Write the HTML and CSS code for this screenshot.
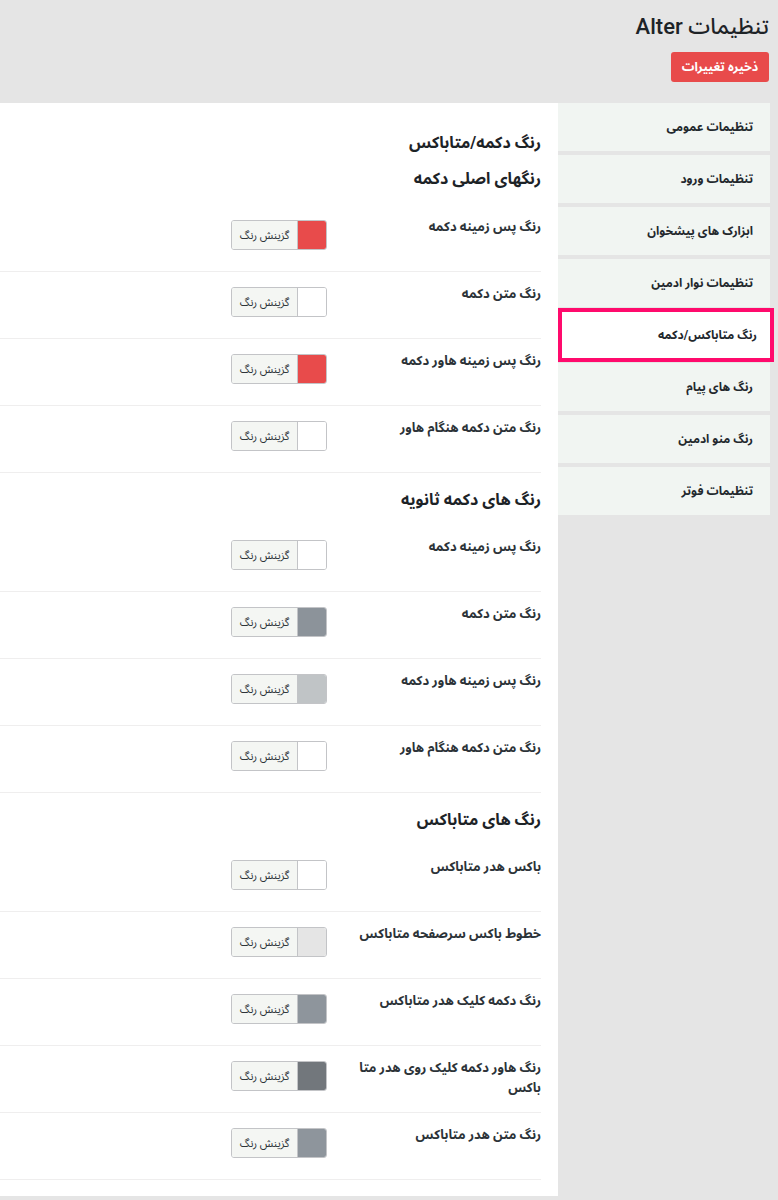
FILE: index.html
```html
<!DOCTYPE html>
<html lang="fa" dir="rtl">
<head>
<meta charset="utf-8">
<title>تنظیمات Alter</title>
<link rel="stylesheet" href="styles.css">
</head>
<body>
<div class="wrap">
  <header class="page-head">
    <h1 class="title">تنظیمات Alter</h1>
    <button class="save-btn" type="button">ذخیره تغییرات</button>
  </header>
  <div class="layout">
    <nav class="tabs">
      <a class="tab">تنظیمات عمومی</a>
      <a class="tab">تنظیمات ورود</a>
      <a class="tab">ابزارک های پیشخوان</a>
      <a class="tab">تنظیمات نوار ادمین</a>
      <a class="tab active">رنگ متاباکس/دکمه</a>
      <a class="tab">رنگ های پیام</a>
      <a class="tab">رنگ منو ادمین</a>
      <a class="tab">تنظیمات فوتر</a>
    </nav>
    <main class="panel">
      <h2 class="panel-title">رنگ دکمه/متاباکس</h2>

      <h3 class="group-title first">رنگهای اصلی دکمه</h3>
      <div class="row"><div class="label">رنگ پس زمینه دکمه</div><div class="field"><span class="picker"><span class="swatch" style="background:#e84b4b"></span><span class="pick-text">گزینش رنگ</span></span></div></div>
      <div class="row"><div class="label">رنگ متن دکمه</div><div class="field"><span class="picker"><span class="swatch" style="background:#ffffff"></span><span class="pick-text">گزینش رنگ</span></span></div></div>
      <div class="row"><div class="label">رنگ پس زمینه هاور دکمه</div><div class="field"><span class="picker"><span class="swatch" style="background:#e84b4b"></span><span class="pick-text">گزینش رنگ</span></span></div></div>
      <div class="row"><div class="label">رنگ متن دکمه هنگام هاور</div><div class="field"><span class="picker"><span class="swatch" style="background:#ffffff"></span><span class="pick-text">گزینش رنگ</span></span></div></div>

      <h3 class="group-title">رنگ های دکمه ثانویه</h3>
      <div class="row"><div class="label">رنگ پس زمینه دکمه</div><div class="field"><span class="picker"><span class="swatch" style="background:#ffffff"></span><span class="pick-text">گزینش رنگ</span></span></div></div>
      <div class="row"><div class="label">رنگ متن دکمه</div><div class="field"><span class="picker"><span class="swatch" style="background:#8c939a"></span><span class="pick-text">گزینش رنگ</span></span></div></div>
      <div class="row"><div class="label">رنگ پس زمینه هاور دکمه</div><div class="field"><span class="picker"><span class="swatch" style="background:#c0c4c6"></span><span class="pick-text">گزینش رنگ</span></span></div></div>
      <div class="row"><div class="label">رنگ متن دکمه هنگام هاور</div><div class="field"><span class="picker"><span class="swatch" style="background:#ffffff"></span><span class="pick-text">گزینش رنگ</span></span></div></div>

      <h3 class="group-title">رنگ های متاباکس</h3>
      <div class="row"><div class="label">باکس هدر متاباکس</div><div class="field"><span class="picker"><span class="swatch" style="background:#ffffff"></span><span class="pick-text">گزینش رنگ</span></span></div></div>
      <div class="row"><div class="label">خطوط باکس سرصفحه متاباکس</div><div class="field"><span class="picker"><span class="swatch" style="background:#e5e5e5"></span><span class="pick-text">گزینش رنگ</span></span></div></div>
      <div class="row"><div class="label">رنگ دکمه کلیک هدر متاباکس</div><div class="field"><span class="picker"><span class="swatch" style="background:#8e959c"></span><span class="pick-text">گزینش رنگ</span></span></div></div>
      <div class="row"><div class="label">رنگ هاور دکمه کلیک روی هدر متا باکس</div><div class="field"><span class="picker"><span class="swatch" style="background:#72777c"></span><span class="pick-text">گزینش رنگ</span></span></div></div>
      <div class="row"><div class="label">رنگ متن هدر متاباکس</div><div class="field"><span class="picker"><span class="swatch" style="background:#8e959c"></span><span class="pick-text">گزینش رنگ</span></span></div></div>
    </main>
  </div>
</div>
</body>
</html>
```

FILE: styles.css
```css
* { box-sizing: border-box; }

html, body {
  margin: 0;
  padding: 0;
  background: #e5e5e5;
}

body {
  direction: rtl;
  font-family: Roboto, "Noto Sans Arabic", "DejaVu Sans", sans-serif;
  color: #1d2327;
}

.wrap {
  width: 778px;
  padding-bottom: 20px;
}

.page-head {
  padding: 12px 9px 0 0;
  display: flex;
  flex-direction: column;
  align-items: flex-start;
}

.title {
  margin: 0;
  font-size: 22px;
  font-weight: 500;
  line-height: 30px;
  color: #1d2327;
}

.save-btn {
  margin-top: 10px;
  width: 98px;
  height: 30px;
  border: none;
  border-radius: 3px;
  background: #e84b4b;
  color: #fff;
  font-family: inherit;
  font-weight: 700;
  font-size: 12.5px;
  padding: 0;
}

.layout {
  margin-top: 21px;
  display: flex;
  align-items: flex-start;
}

.tabs {
  width: 212px;
  margin-right: 8px;
  display: flex;
  flex-direction: column;
  gap: 4px;
}

.tab {
  display: flex;
  align-items: center;
  height: 48px;
  padding: 0 17px 0 10px;
  background: #f1f5f2;
  font-size: 12px;
  font-weight: 700;
  color: #23282d;
}

.tab.active {
  height: 54px;
  margin: -3px -4px -3px 0;
  border: 4px solid #ff0a6c;
  padding-right: 13px;
  background: #ffffff;
}

.panel {
  flex: 1;
  background: #fff;
  padding: 28px 17px 16px 0;
}

.panel-title {
  margin: 0;
  font-size: 16px;
  line-height: 24px;
  font-weight: 700;
}

.group-title {
  margin: 15px 0 13px;
  font-size: 16px;
  line-height: 24px;
  font-weight: 700;
}

.group-title.first {
  margin-top: 12px;
  margin-bottom: 14px;
}

.row {
  display: flex;
  height: 67px;
  border-bottom: 1px solid #efeeee;
}

.label {
  width: 204px;
  padding: 12px 0 0 12px;
  font-size: 13px;
  line-height: 20px;
  font-weight: 700;
  color: #2c3338;
}

.field {
  padding: 15px 10px 0 0;
}

.picker {
  display: flex;
  width: 96px;
  height: 30px;
  border: 1px solid #c3c4c7;
  border-radius: 3px;
  overflow: hidden;
}

.swatch {
  width: 29px;
  border-left: 1px solid #c3c4c7;
}

.pick-text {
  flex: 1;
  display: flex;
  align-items: center;
  justify-content: center;
  background: #f4f6f3;
  font-size: 11px;
  color: #2c3338;
}
```
